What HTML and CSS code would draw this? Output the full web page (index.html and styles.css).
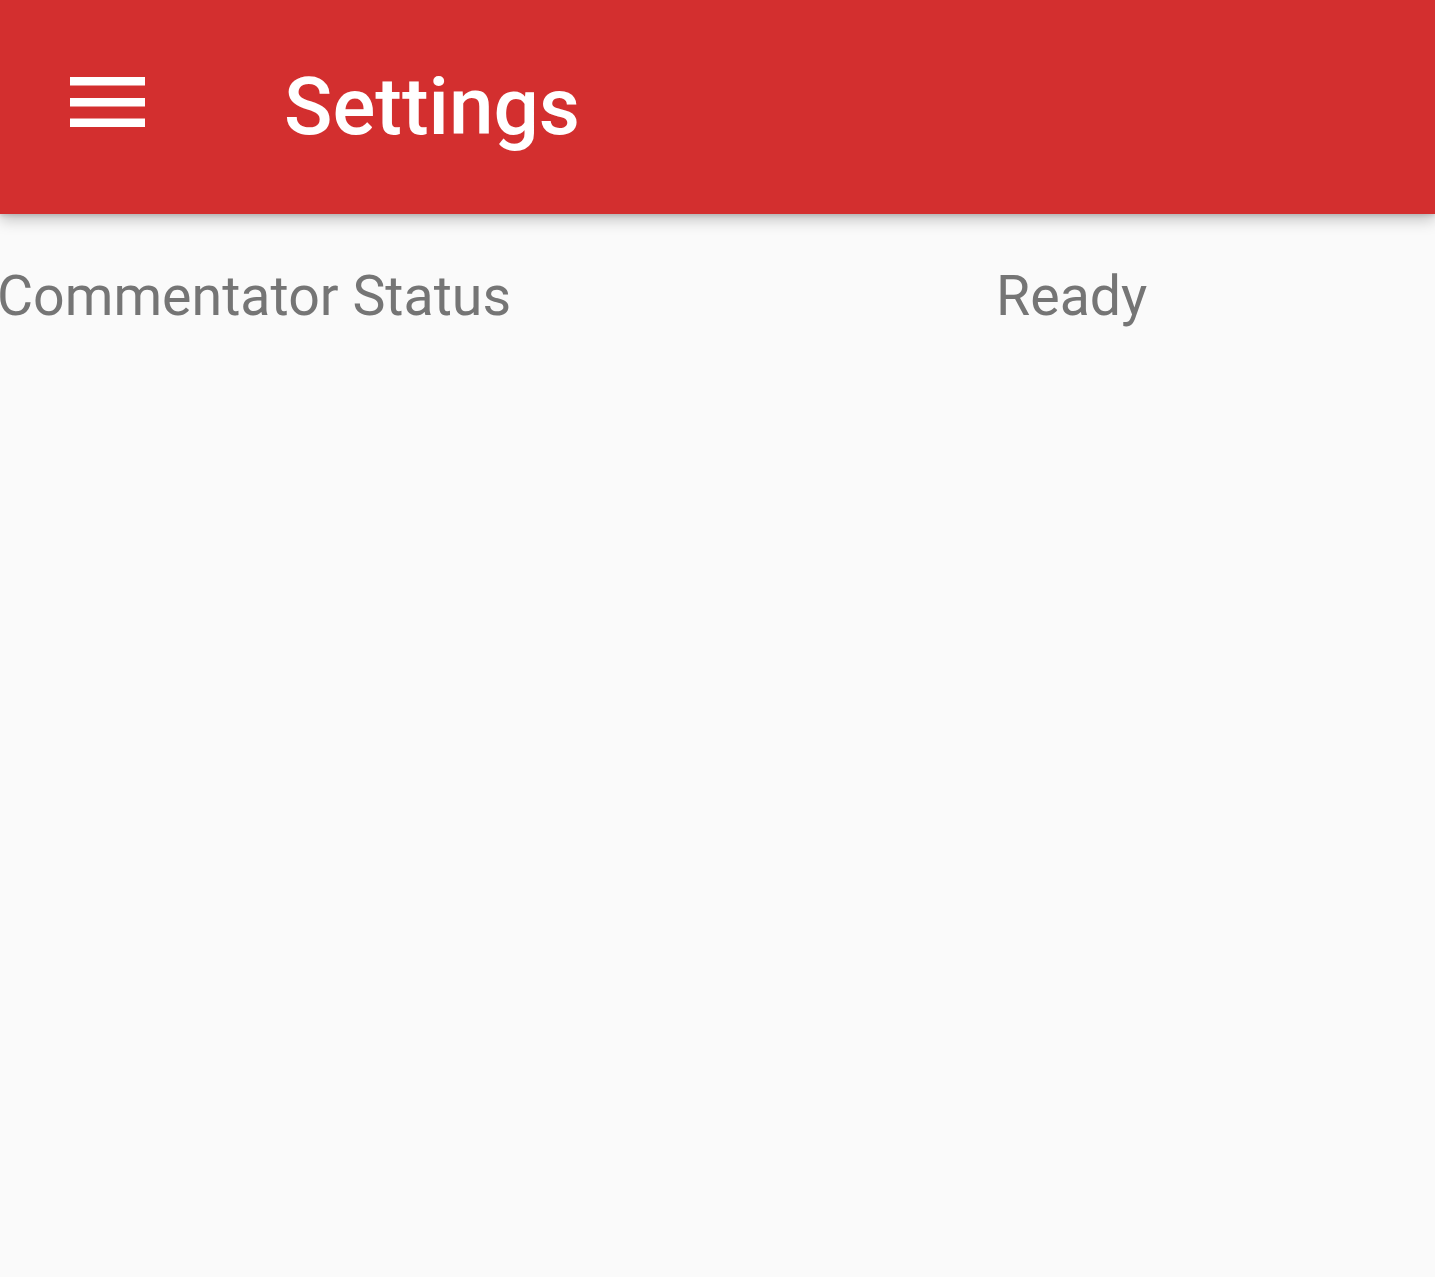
FILE: index.html
```html
<!DOCTYPE html>
<html>
<head>
<meta charset="utf-8">
<link rel="stylesheet" href="styles.css">
</head>
<body>
<header class="toolbar">
  <button class="menu-btn" aria-label="Menu">
    <svg width="75" height="50" viewBox="0 0 75 50"><rect x="0" y="0" width="75" height="8.5" fill="#fff"/><rect x="0" y="21" width="75" height="8.5" fill="#fff"/><rect x="0" y="41.5" width="75" height="8.5" fill="#fff"/></svg>
  </button>
  <h1 class="title">Settings</h1>
</header>
<main class="content">
  <div class="row">
    <div class="label">Commentator Status</div>
    <div class="value">Ready</div>
  </div>
</main>
</body>
</html>
```
FILE: styles.css
```css
html, body {
  margin: 0;
  padding: 0;
  height: 100%;
}
body {
  background: #fafafa;
  font-family: Roboto, "Liberation Sans", sans-serif;
  overflow: hidden;
}
.toolbar {
  height: 214px;
  background: #d32f2f;
  display: flex;
  align-items: center;
  box-shadow: 0 6px 14px rgba(0,0,0,0.22), 0 2px 4px rgba(0,0,0,0.12);
  position: relative;
  z-index: 1;
}
.menu-btn {
  background: none;
  border: 0;
  padding: 0;
  margin-left: 70px;
  width: 75px;
  height: 50px;
  display: flex;
  margin-top: -10px;
}
.title {
  margin: 0 0 0 139px;
  color: #fff;
  font-weight: 500;
  font-size: 80px;
  line-height: 1;
  margin-top: 0;
}
.content {
  padding-top: 38px;
}
.row {
  display: flex;
  align-items: baseline;
  color: #757575;
  font-size: 55.5px;
  line-height: 90px;
}
.label {
  width: 996px;
  margin-left: -3px;
}
.value {
  margin-left: 3px;
}
```
